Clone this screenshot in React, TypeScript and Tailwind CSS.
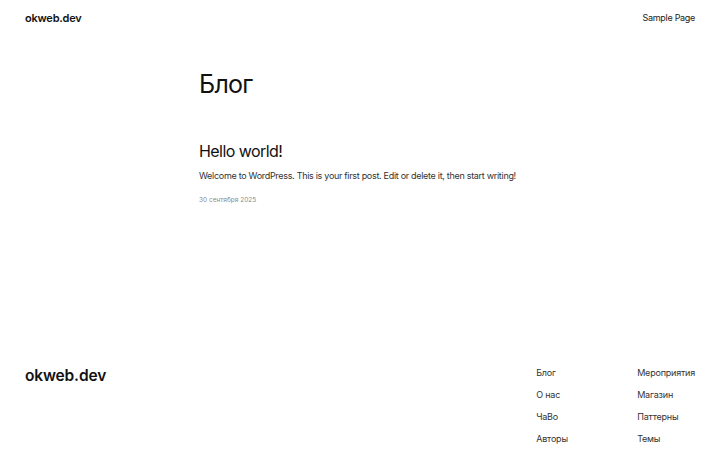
const footerLinks: string[][] = [
  ['Блог', 'О нас', 'ЧаВо', 'Авторы'],
  ['Мероприятия', 'Магазин', 'Паттерны', 'Темы'],
];

export default function App() {
  return (
    <div className="flex h-[450px] w-[720px] flex-col bg-white font-['Inter',sans-serif] text-[#111111]">
      <header className="flex h-[36px] items-center justify-between px-[25px]">
        <a className="text-[11px] font-semibold tracking-[-0.02em]">okweb.dev</a>
        <nav className="text-[9px] tracking-[-0.3px] text-[#222]">Sample Page</nav>
      </header>

      <main className="mx-auto w-[322px] flex-1">
        <h1 className="mt-[32px] text-[25px] leading-[32px] tracking-[-0.03em]">Блог</h1>

        <article className="mt-[41px]">
          <h2 className="text-[16px] leading-[20px] tracking-[-0.035em]">Hello world!</h2>
          <p className="mt-[8px] text-[9px] leading-[13px] tracking-[-0.3px] text-[#333]">
            Welcome to WordPress. This is your first post. Edit or delete it, then start writing!
          </p>
          <time className="mt-[13px] block text-[6.5px] leading-[10px] text-[#8a8a8a]">30 сентября 2025</time>
        </article>
      </main>

      <footer className="flex justify-between px-[25px] pb-[4px]">
        <div className="-mt-[1px] text-[15.5px] leading-[22px] font-semibold tracking-[-0.01em]">okweb.dev</div>
        <div className="flex">
          {footerLinks.map((col, i) => (
            <ul key={i} className={i === 0 ? 'flex w-[101px] flex-col gap-[8px]' : 'flex flex-col gap-[8px]'}>
              {col.map((label) => (
                <li key={label} className="text-[9px] leading-[14px] tracking-[-0.2px] text-[#333]">
                  {label}
                </li>
              ))}
            </ul>
          ))}
        </div>
      </footer>
    </div>
  );
}
